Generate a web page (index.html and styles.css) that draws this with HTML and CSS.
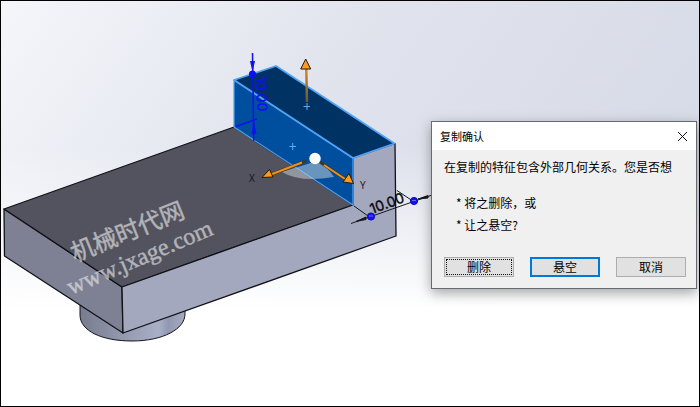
FILE: index.html
```html
<!DOCTYPE html>
<html lang="zh-CN">
<head>
<meta charset="utf-8">
<meta name="viewport" content="width=device-width, initial-scale=1">
<title>复制确认</title>
<link rel="stylesheet" href="styles.css">
</head>
<body>
<main class="viewport">
  <svg class="scene" viewBox="1 1 698 405" preserveAspectRatio="xMinYMin slice" role="img" aria-label="三维模型">
    <defs>
      <linearGradient id="cyl" x1="0" x2="1" y1="0" y2="0">
        <stop offset="0" stop-color="#777b8e"/>
        <stop offset=".4" stop-color="#9298ae"/>
        <stop offset=".75" stop-color="#a9afc6"/>
        <stop offset=".84" stop-color="#9298af"/>
        <stop offset="1" stop-color="#a5abc3"/>
      </linearGradient>
      <linearGradient id="stem" x1="0" x2="0" y1="70" y2="102" gradientUnits="userSpaceOnUse">
        <stop offset="0" stop-color="#d08422"/>
        <stop offset="1" stop-color="#6b5a3b"/>
      </linearGradient>
    </defs>

    <!-- base cylinder -->
    <path d="M80 304V315C80 331 102 341 132 341C163 341 185 329 185 314V300Z" fill="url(#cyl)" stroke="#15161a"/>

    <!-- plate -->
    <g stroke="#111216" stroke-width="1.3" stroke-linejoin="round">
      <path d="M4 209L122 287L123 333L4.5 256Z" fill="#7e8194"/>
      <path d="M4 209L234 127L353 205L122 287Z" fill="#52535f"/>
      <path d="M353 158L395 143.500L396 236L123 333L122 287L353 205Z" fill="#a4a8bf"/>
    </g>

    <!-- selected boss -->
    <g stroke="#50a3f6" stroke-width="1.8" stroke-linejoin="round">
      <path d="M234 80L353 158L353 205L234 127Z" fill="#004f9e" stroke-width="1.200"/>
      <path d="M234 80L276 66L394.500 143.500L353 158Z" fill="#003263"/>
    </g>
    <path d="M303.500 106.500H310M307 103V110M289.500 146.500H296M292.700 143V150" stroke="#5da9f5"/>

    <!-- vertical dimension -->
    <g stroke="#1010f0" stroke-width="1.500" fill="#1010f0">
      <path d="M252.500 53L253.800 141M236 126.500L257 119"/>
      <path d="M250 61H255L252.500 72ZM251.500 134L254 121L256.500 134Z" stroke="none"/>
      <circle cx="252.500" cy="74" r="2.800"/>
    </g>
    <text class="dimension dimension-vertical" transform="translate(256 76) rotate(88)">10.00</text>

    <!-- drag handles -->
    <path d="M282 172Q300 183 334 177Q327 166 317 161Z" fill="#c8d4dc" fill-opacity=".52"/>
    <path d="M306.300 69L307 102" stroke="url(#stem)" stroke-width="2.400"/>
    <path d="M306 161L271 174.500M320 162L345 179" stroke="#403725" stroke-width="3"/>
    <path d="M302 162.500L271 174.500M324 165L345 179" stroke="#ee921d" stroke-width="2"/>
    <g fill="#ff9b1a" stroke="#22190a" stroke-linejoin="round">
      <path d="M305.700 59L300.700 69H310.700Z"/>
      <path d="M262 177.500L269.500 169.500L273 177Z"/>
      <path d="M353.500 183.500L343 182L349 173.500Z"/>
    </g>
    <circle cx="315" cy="158.500" r="5.700" fill="#fff"/>
    <text class="axis" x="249" y="182">X</text>
    <text class="axis" x="360" y="189">Y</text>

    <!-- horizontal dimension -->
    <g stroke="#17181c" fill="#17181c">
      <path d="M351 223.500L435 194M354 206L368 216M397 190.500L412 200.500" fill="none"/>
      <path d="M356 221.500L366 217V219.500ZM418 199L428 195.500V198Z"/>
    </g>
    <text class="dimension" transform="translate(372 214) rotate(-20)">10.00</text>
    <g fill="#1212f2" stroke="#0b0bb8">
      <circle cx="371" cy="216.500" r="3.600"/>
      <circle cx="414" cy="201" r="3.600"/>
    </g>
    <path d="M369 216H373M412 200.500H416" stroke="#6868ff"/>

    <!-- watermark -->
    <g class="watermark">
      <text class="watermark-name" transform="translate(75 262) rotate(-22)">机械时代网</text>
      <text class="watermark-site" transform="translate(71 295) rotate(-23)">www.jxage.com</text>
    </g>
  </svg>

  <section class="dialog" role="dialog" aria-labelledby="dialog-title">
    <header class="titlebar">
      <h1 class="title" id="dialog-title">复制确认</h1>
      <button class="close" type="button" aria-label="关闭">
        <svg class="close-icon" viewBox="0 0 11 11" aria-hidden="true"><path d="M1 1L10 10M10 1L1 10"/></svg>
      </button>
    </header>
    <div class="content">
      <p class="message">在复制的特征包含外部几何关系。您是否想</p>
      <div class="options">
        <p class="option">* 将之删除，或</p>
        <p class="option">* 让之悬空?</p>
      </div>
      <div class="actions">
        <button class="button button-focus" type="button">删除</button>
        <button class="button button-default" type="button">悬空</button>
        <button class="button" type="button">取消</button>
      </div>
    </div>
  </section>
</main>
</body>
</html>
```
FILE: styles.css
```css
* {
  box-sizing: border-box;
}

body {
  margin: 0;
  font-family: "Noto Sans CJK SC", sans-serif;
  color: #000;
}

h1,
p {
  margin: 0;
}

.viewport {
  position: relative;
  height: 100vh;
  overflow: hidden;
  border: 1px solid #000;
  background:
    linear-gradient(to bottom, rgba(255, 255, 255, 0) 36%, #fff 76%),
    linear-gradient(125deg, #f4f6fa 0%, #e1e4ed 38%, #d8dce8 75%, #d6dae7 100%);
}

.scene {
  display: block;
  width: 100%;
  height: 100%;
}

.dimension {
  font: 14px Inter, sans-serif;
  fill: #08080a;
  stroke: #08080a;
  stroke-width: 0.4px;
}

.dimension-vertical {
  fill: #1010f0;
  stroke: #1010f0;
}

.axis {
  font: 10px "Open Sans", sans-serif;
  fill: #111;
}

.watermark {
  fill: #e6e6e6;
  stroke: #e6e6e6;
  stroke-width: 0.4px;
  opacity: 0.65;
}

.watermark-name {
  font: 24px "Noto Sans CJK SC", sans-serif;
}

.watermark-site {
  font: 24px "Liberation Serif", serif;
}

.dialog {
  position: absolute;
  top: 120px;
  right: 2px;
  width: 266px;
  border: 1px solid #686a70;
  background: #f0f0f0;
  box-shadow: 0 4px 12px rgba(0, 0, 0, 0.35);
}

.titlebar {
  display: flex;
  align-items: center;
  justify-content: space-between;
  height: 28px;
  padding: 0 8px;
  background: #fff;
}

.title {
  font-size: 11px;
  font-weight: 400;
  line-height: 16px;
}

.close {
  display: flex;
  padding: 0;
  border: 0;
  background: none;
}

.close-icon {
  width: 11px;
  height: 11px;
  fill: none;
  stroke: #111;
}

.content {
  padding: 6px 10px 11px 12px;
}

.message,
.option {
  font-size: 12px;
  line-height: 22px;
  white-space: nowrap;
}

.options {
  padding: 14px 12px 21px;
}

.actions {
  display: flex;
  justify-content: space-between;
}

.button {
  width: 70px;
  height: 20px;
  padding: 0;
  border: 1px solid #adadad;
  background: #e1e1e1;
  font-family: inherit;
  font-size: 12px;
  line-height: 16px;
  color: #000;
}

.button-focus {
  outline: 1px dotted #111;
  outline-offset: -3px;
}

.button-default {
  border: 2px solid #0078d7;
}
```
